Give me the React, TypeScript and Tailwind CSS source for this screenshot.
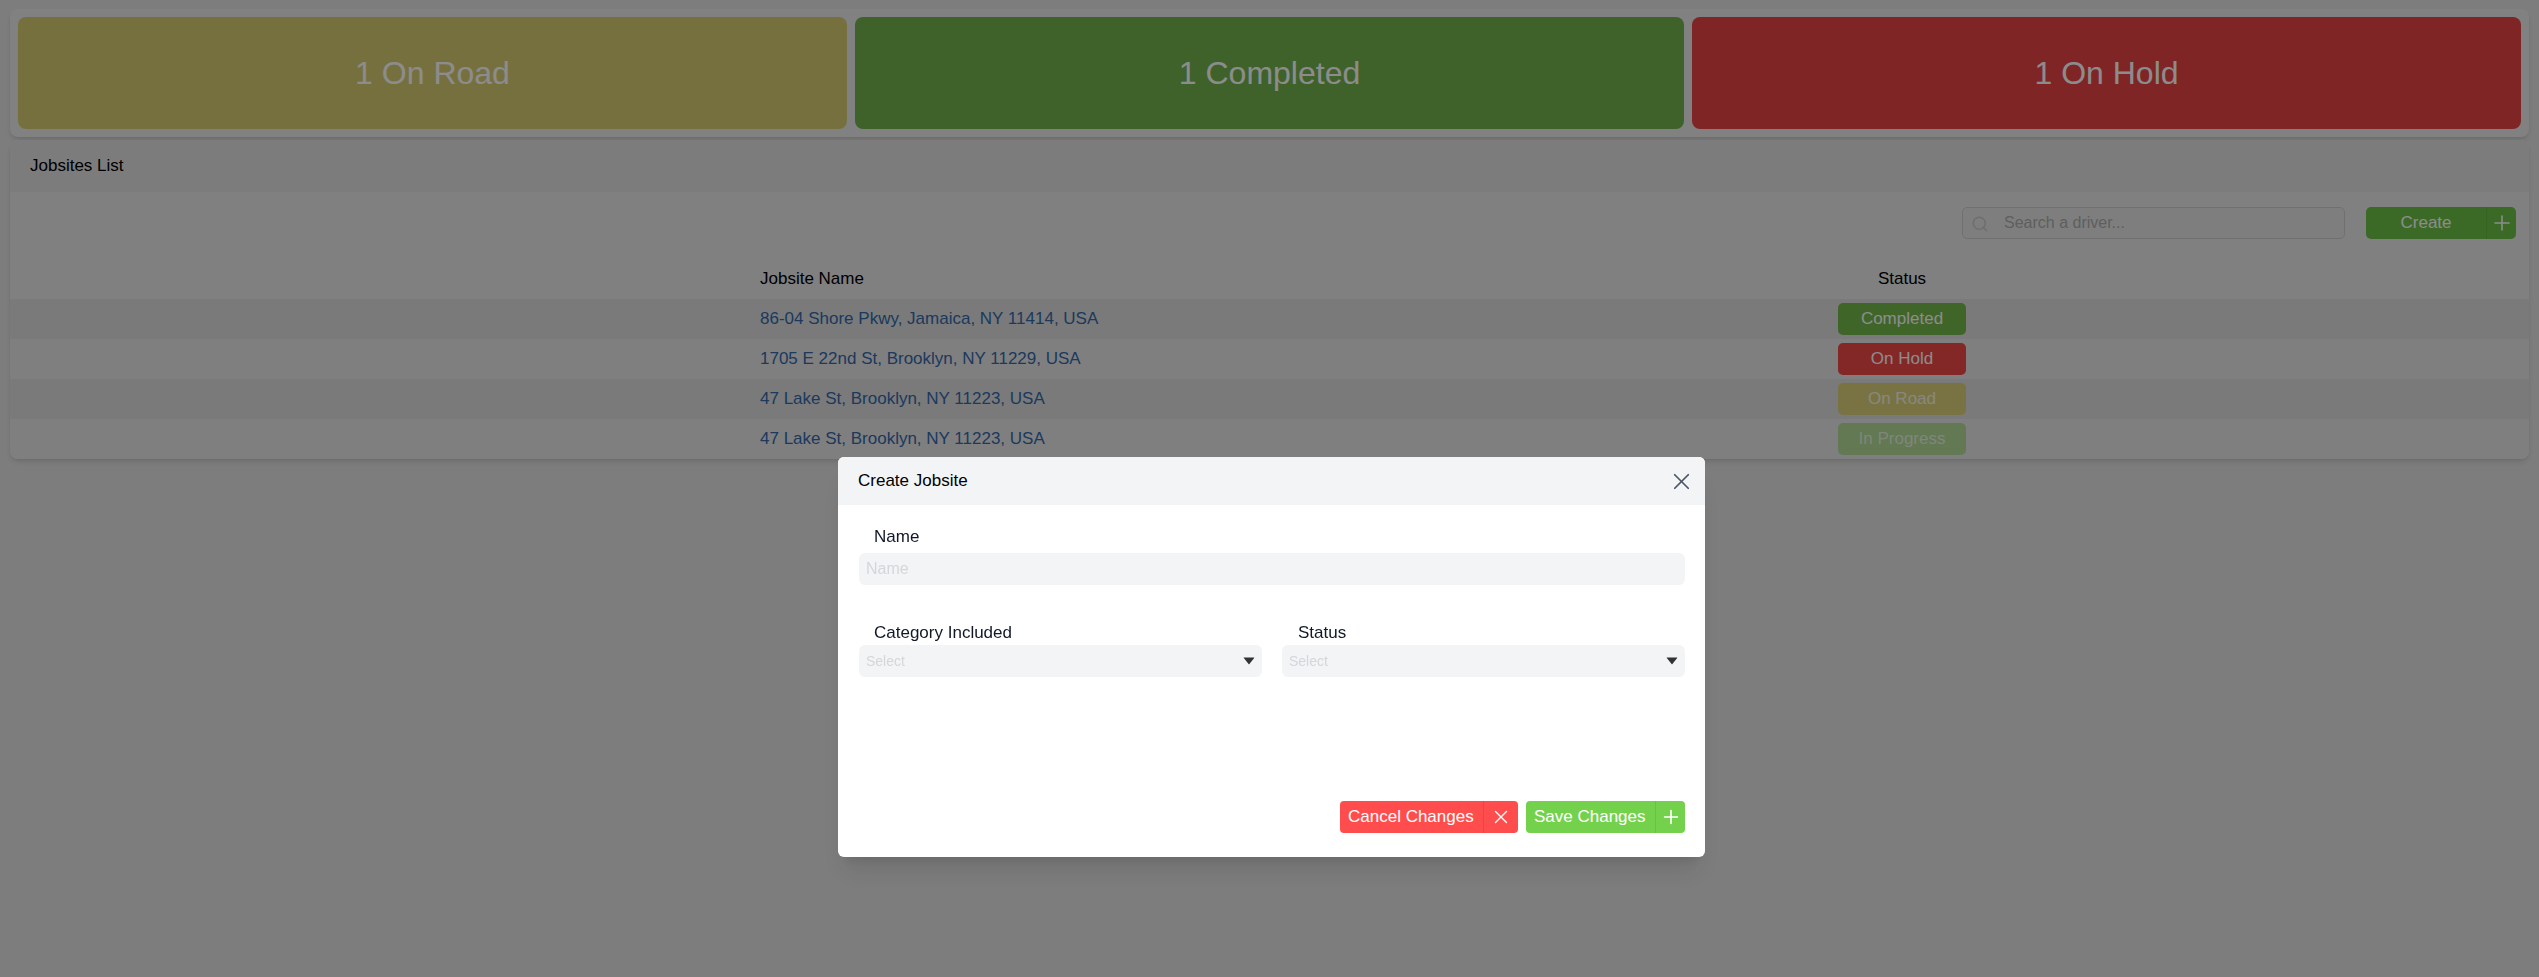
import React from "react";
import { Plus, Search, X } from "lucide-react";

type Row = {
  name: string;
  status: string;
  badge: string;
};

const rows: Row[] = [
  { name: "86-04 Shore Pkwy, Jamaica, NY 11414, USA", status: "Completed", badge: "bg-[#74b84c] text-white" },
  { name: "1705 E 22nd St, Brooklyn, NY 11229, USA", status: "On Hold", badge: "bg-[#ee4848] text-white" },
  { name: "47 Lake St, Brooklyn, NY 11223, USA", status: "On Road", badge: "bg-[#dcd27a] text-white/80" },
  { name: "47 Lake St, Brooklyn, NY 11223, USA", status: "In Progress", badge: "bg-[#b3dc98] text-white/70" },
];

const SummaryCard = ({ label, color }: { label: string; color: string }) => (
  <div className={`h-[112px] rounded-lg flex items-center justify-center text-[32px] text-white ${color}`}>
    {label}
  </div>
);

const Caret = () => (
  <svg width="12" height="8" viewBox="0 0 12 8" className="shrink-0">
    <path d="M0.5 1 Q0.5 0.5 1 0.5 L11 0.5 Q11.5 0.5 11.2 1 L6.4 7 Q6 7.5 5.6 7 L0.8 1 Z" fill="#333" />
  </svg>
);

export default function App() {
  return (
    <div className="min-h-screen bg-[#e4e4e4] px-[10px] pt-[9px] font-['Liberation_Sans',Arial,sans-serif] text-[17px] text-black">
      {/* summary cards */}
      <div className="bg-[#ececec] rounded-lg shadow-md p-[8px] grid grid-cols-3 gap-[8px]">
        <SummaryCard label="1 On Road" color="bg-[#d8cd74]" />
        <SummaryCard label="1 Completed" color="bg-[#72b34b]" />
        <SummaryCard label="1 On Hold" color="bg-[#e74444]" />
      </div>

      {/* jobsites list */}
      <div className="mt-[3px] bg-[#e9e9e9] rounded-lg shadow-md overflow-hidden">
        <div className="h-[52px] bg-[#e2e2e2] flex items-center pl-[20px]">Jobsites List</div>

        <div className="flex justify-end items-center pt-[15px] pb-[20px] pr-[13px]">
          <div className="relative w-[383px] h-[32px] rounded-[5px] border border-[#cdcdcd] bg-[#e6e6e6]">
            <Search size={18} strokeWidth={2} className="absolute left-[8px] top-[7px] text-[#c8c8c8]" />
            <input
              className="w-full h-full bg-transparent pl-[41px] text-[16px] outline-none placeholder:text-[#adadad]"
              placeholder="Search a driver..."
            />
          </div>
          <button className="ml-[21px] h-[32px] w-[150px] rounded-[5px] bg-[#6bc245] text-white flex items-stretch">
            <span className="w-[120px] flex items-center justify-center">Create</span>
            <span className="w-[30px] flex items-center justify-center border-l border-[#62b53e]">
              <Plus size={24} strokeWidth={1.6} />
            </span>
          </button>
        </div>

        <div className="grid grid-cols-[750px_1078px_128px_1fr] h-[40px] items-center">
          <div />
          <div>Jobsite Name</div>
          <div className="text-center">Status</div>
          <div />
        </div>

        {rows.map((row, i) => (
          <div
            key={i}
            className={`grid grid-cols-[750px_1078px_128px_1fr] h-[40px] items-center ${
              i % 2 === 0 ? "bg-[#dfdfdf]" : "bg-[#e8e8e8]"
            }`}
          >
            <div />
            <div className="text-[#3369ab]">{row.name}</div>
            <div className={`h-[32px] rounded-[5px] flex items-center justify-center ${row.badge}`}>{row.status}</div>
            <div />
          </div>
        ))}
      </div>

      {/* modal */}
      <div className="fixed inset-0 bg-black/45" />
      <div className="fixed left-[838px] top-[457px] w-[867px] h-[400px] bg-white rounded-md shadow-xl">
        <div className="h-[48px] bg-[#f3f4f6] rounded-t-md flex items-center justify-between pl-[20px] pr-[10px]">
          <span className="text-[17px] text-black">Create Jobsite</span>
          <X size={27} strokeWidth={1.5} className="text-[#4b5563]" />
        </div>

        <div className="pl-[21px] pr-[20px] pt-[22px]">
          <label className="block pl-[15px] leading-[20px] font-medium text-[#111827]">Name</label>
          <input
            className="mt-[6px] w-full h-[32px] rounded-md bg-[#f3f4f6] px-[7px] text-[16px] outline-none placeholder:text-[#d4d6da]"
            placeholder="Name"
          />

          <div className="mt-[38px] grid grid-cols-2 gap-[20px]">
            <div>
              <label className="block pl-[15px] leading-[20px] font-medium text-[#111827]">Category Included</label>
              <div className="mt-[2px] h-[32px] rounded-md bg-[#f3f4f6] flex items-center justify-between pl-[7px] pr-[7px]">
                <span className="text-[14px] text-[#d4d6da]">Select</span>
                <Caret />
              </div>
            </div>
            <div>
              <label className="block pl-[16px] leading-[20px] font-medium text-[#111827]">Status</label>
              <div className="mt-[2px] h-[32px] rounded-md bg-[#f3f4f6] flex items-center justify-between pl-[7px] pr-[7px]">
                <span className="text-[14px] text-[#d4d6da]">Select</span>
                <Caret />
              </div>
            </div>
          </div>

          <div className="mt-[124px] flex justify-end gap-[8px]">
            <button className="h-[32px] w-[178px] rounded-[4px] bg-[#ff4d4d] text-white flex items-stretch">
              <span className="flex-1 flex items-center pl-[8px]">Cancel Changes</span>
              <span className="w-[35px] flex items-center justify-center border-l border-[#ec4343]">
                <X size={22} strokeWidth={1.5} />
              </span>
            </button>
            <button className="h-[32px] w-[159px] rounded-[4px] bg-[#74d14c] text-white flex items-stretch">
              <span className="flex-1 flex items-center pl-[8px]">Save Changes</span>
              <span className="w-[30px] flex items-center justify-center border-l border-[#68c243]">
                <Plus size={22} strokeWidth={1.8} />
              </span>
            </button>
          </div>
        </div>
      </div>
    </div>
  );
}
